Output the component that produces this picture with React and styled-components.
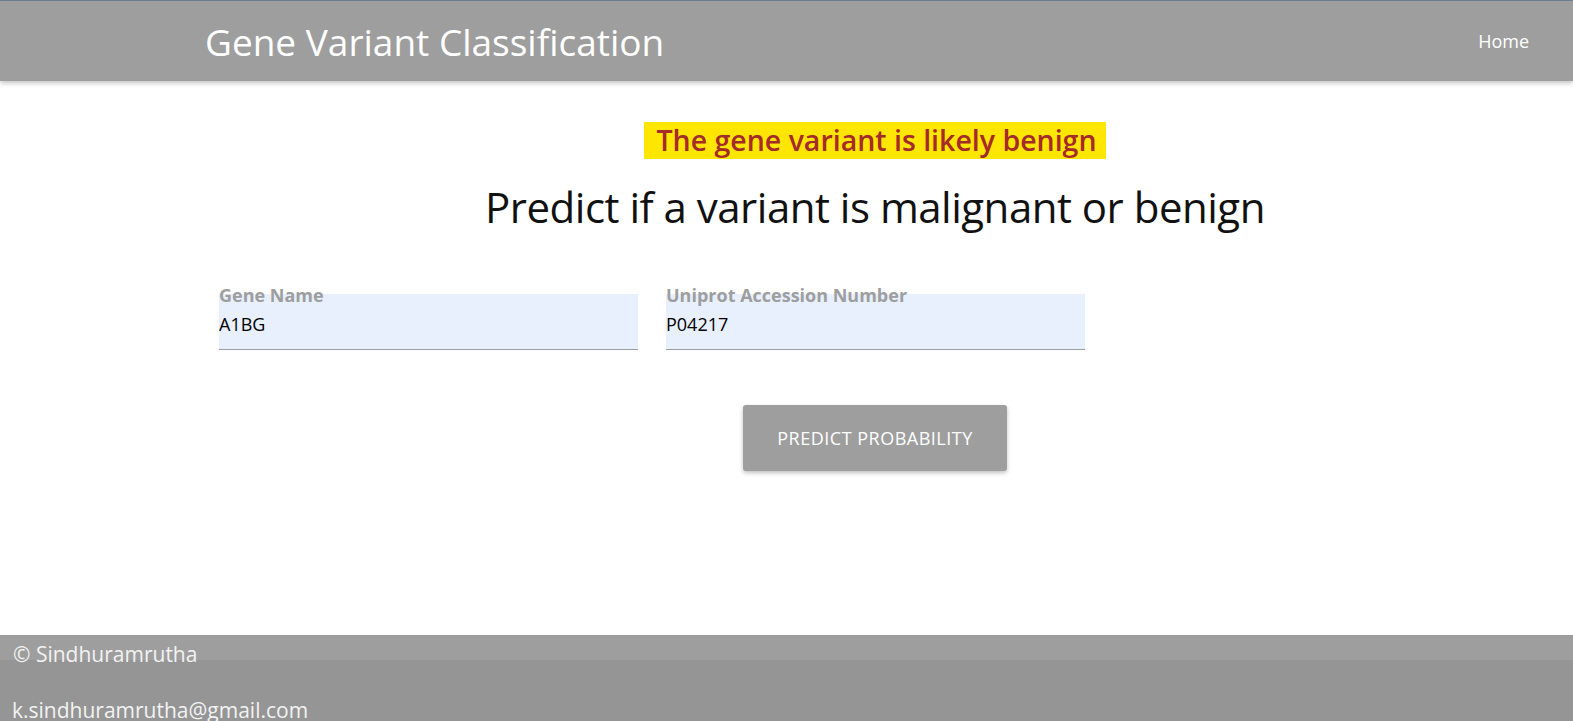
import React from "react";
import styled, { createGlobalStyle } from "styled-components";

const GlobalStyle = createGlobalStyle`
  body {
    margin: 0;
    font-family: "Open Sans", "Noto Sans", sans-serif;
    background: #fff;
  }
`;

const Header = styled.header`
  height: 80px;
  border-top: 1px solid #6b7d8a;
  background-color: #9e9e9e;
  box-shadow: 0 2px 5px rgba(0, 0, 0, 0.25);
  display: flex;
  align-items: center;
  justify-content: space-between;
  padding: 0 44px 0 205px;
  position: relative;
  z-index: 1;
`;

const Brand = styled.div`
  color: #fff;
  font-size: 37px;
`;

const NavLink = styled.a`
  color: #fff;
  font-size: 18px;
  text-decoration: none;
`;

const Main = styled.main`
  height: 554px;
  padding: 0 42px 0 219px;
  display: flex;
  flex-direction: column;
  align-items: center;
`;

const Result = styled.mark`
  margin-top: 41px;
  background-color: #ffe600;
  color: #a52a2a;
  font-size: 28.5px;
  font-weight: 600;
  line-height: 37px;
  padding: 0 9px 0 12px;
`;

const Title = styled.h1`
  margin: 19px 0 0;
  font-size: 42px;
  font-weight: 400;
  color: #111;
  letter-spacing: -0.5px;
`;

const FormRow = styled.div`
  align-self: stretch;
  display: flex;
  gap: 28px;
  margin-top: 51px;
`;

const Field = styled.div`
  width: 419px;
  display: flex;
  flex-direction: column;
`;

const Label = styled.label`
  position: relative;
  z-index: 1;
  color: #9e9e9e;
  font-size: 18px;
  font-weight: 700;
  line-height: 18px;
  margin-bottom: -10px;
`;

const Input = styled.input`
  height: 56px;
  box-sizing: border-box;
  border: none;
  border-bottom: 1px solid #9e9e9e;
  background-color: #e8f0fe;
  padding: 4px 0 0;
  font-family: inherit;
  font-size: 18px;
  color: #000;
  outline: none;
`;

const Button = styled.button`
  margin-top: 55px;
  width: 264px;
  height: 66px;
  border: none;
  border-radius: 3px;
  background-color: #9e9e9e;
  color: #fff;
  font-family: inherit;
  font-size: 18px;
  letter-spacing: 0.5px;
  text-transform: uppercase;
  box-shadow: 0 2px 4px rgba(0, 0, 0, 0.25);
  cursor: pointer;
`;

const Footer = styled.footer`
  background-color: #959595;
  color: #f2f2f2;
  font-size: 21px;
  padding-bottom: 20px;
`;

const Copyright = styled.div`
  height: 25px;
  box-sizing: border-box;
  background-color: #9e9e9e;
  padding: 9px 0 0 13px;
  line-height: 1;
  white-space: nowrap;
`;

const Email = styled.div`
  padding: 40px 0 0 12px;
  line-height: 1;
`;

const App = () => {
  return (
    <>
      <GlobalStyle />
      <Header>
        <Brand>Gene Variant Classification</Brand>
        <NavLink href="#">Home</NavLink>
      </Header>
      <Main>
        <Result>The gene variant is likely benign</Result>
        <Title>Predict if a variant is malignant or benign</Title>
        <FormRow>
          <Field>
            <Label>Gene Name</Label>
            <Input defaultValue="A1BG" />
          </Field>
          <Field>
            <Label>Uniprot Accession Number</Label>
            <Input defaultValue="P04217" />
          </Field>
        </FormRow>
        <Button>Predict Probability</Button>
      </Main>
      <Footer>
        <Copyright>© Sindhuramrutha</Copyright>
        <Email>k.sindhuramrutha@gmail.com</Email>
      </Footer>
    </>
  );
};

export default App;
